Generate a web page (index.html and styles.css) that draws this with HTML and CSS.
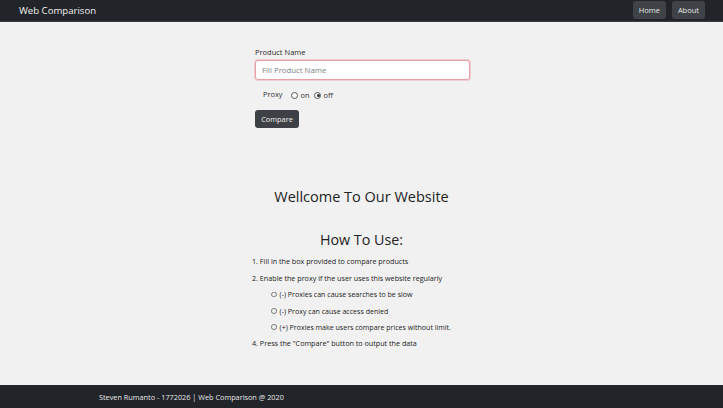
FILE: index.html
```html
<!DOCTYPE html>
<html>
<head>
<meta charset="utf-8">
<link rel="stylesheet" href="styles.css">
</head>
<body>
<nav class="navbar">
  <span class="brand">Web Comparison</span>
  <div class="nav-links">
    <a class="nav-btn">Home</a>
    <a class="nav-btn">About</a>
  </div>
</nav>
<main class="main">
  <form class="search-form">
    <label class="field-label">Product Name</label>
    <input class="field-input" type="text" placeholder="Fill Product Name">
    <div class="proxy-row">
      <span class="proxy-label">Proxy</span>
      <label class="radio"><span class="radio-dot"></span>on</label>
      <label class="radio"><span class="radio-dot checked"></span>off</label>
    </div>
    <button class="compare-btn" type="button">Compare</button>
  </form>
  <h2 class="welcome">Wellcome To Our Website</h2>
  <h2 class="howto">How To Use:</h2>
  <div class="steps">
    <div class="step">1. Fill in the box provided to compare products</div>
    <div class="step">2. Enable the proxy if the user uses this website regularly</div>
    <ul class="sub-steps">
      <li>(-) Proxies can cause searches to be slow</li>
      <li>(-) Proxy can cause access denied</li>
      <li>(+) Proxies make users compare prices without limit.</li>
    </ul>
    <div class="step">4. Press the "Compare" button to output the data</div>
  </div>
</main>
<footer class="footer">
  <span class="footer-text">Steven Rumanto - 1772026 | Web Comparison @ 2020</span>
</footer>
</body>
</html>
```
FILE: styles.css
```css
* { box-sizing: border-box; }
html, body { margin: 0; padding: 0; }
body {
  width: 723px;
  height: 408px;
  background: #f1f1f1;
  font-family: "Open Sans", "Noto Sans", sans-serif;
  color: #212529;
  display: flex;
  flex-direction: column;
  overflow: hidden;
}
.navbar {
  height: 22px;
  background: #212429;
  display: flex;
  align-items: center;
  justify-content: space-between;
  padding: 0 18px 0 19px;
  border-bottom: 1px solid #3a3d42;
}
.brand {
  color: #f2f2f2;
  font-size: 9.6px;
}
.nav-links { display: flex; gap: 6px; align-items: center; }
.nav-btn {
  background: #3f4247;
  color: #e8e8e8;
  font-size: 7.5px;
  height: 18px;
  display: flex;
  align-items: center;
  padding: 0 6px;
  border-radius: 3px;
  margin-top: -2px;
}
.main {
  flex: 1;
  display: flex;
  flex-direction: column;
  align-items: center;
}
.search-form {
  width: 215px;
  margin-left: 2px;
  padding-top: 24px;
  display: flex;
  flex-direction: column;
  align-items: flex-start;
}
.field-label {
  font-size: 7.5px;
  color: #2a2a2a;
  line-height: 12px;
  margin-bottom: 2px;
}
.field-input {
  width: 215px;
  height: 20px;
  border: 1px solid #e8a0a6;
  border-radius: 3px;
  background: #fff;
  box-shadow: 0 0 0 1px rgba(232, 140, 150, 0.35);
  padding: 0 6px;
  font-family: inherit;
  font-size: 7.8px;
  outline: none;
}
.field-input::placeholder { color: #7a7f85; }
.proxy-row {
  display: flex;
  align-items: center;
  height: 14px;
  margin-top: 8px;
  padding-left: 8px;
  font-size: 7.4px;
  color: #333;
}
.proxy-label { margin-right: 9px; margin-top: -3px; }
.radio {
  display: flex;
  align-items: center;
  margin-right: 5px;
}
.radio-dot {
  width: 7px;
  height: 7px;
  border: 0.8px solid #555;
  border-radius: 50%;
  margin-right: 2px;
  background: #fff;
  position: relative;
}
.radio-dot.checked::after {
  content: "";
  position: absolute;
  left: 1.2px;
  top: 1.2px;
  width: 3.2px;
  height: 3.2px;
  border-radius: 50%;
  background: #333;
}
.compare-btn {
  margin-top: 8px;
  width: 44px;
  height: 18px;
  background: #3d4146;
  color: #f0f0f0;
  border: none;
  border-radius: 3px;
  font-family: inherit;
  font-size: 7.4px;
  padding: 0;
}
.welcome {
  margin: 58px 0 0 0;
  font-weight: 400;
  font-size: 14.5px;
  line-height: 22px;
  color: #222;
}
.howto {
  margin: 21px 0 0 0;
  font-weight: 400;
  font-size: 14.3px;
  line-height: 22px;
  color: #222;
}
.steps {
  align-self: flex-start;
  margin-left: 252px;
  margin-top: 2px;
  width: 320px;
  color: #222;
}
.step {
  line-height: 16.6px;
  font-size: 7.2px;
}
.sub-steps {
  margin: 0;
  padding-left: 19px;
  list-style: none;
  font-size: 7.05px;
}
.sub-steps li {
  line-height: 16.4px;
  display: flex;
  align-items: center;
}
.sub-steps li::before {
  content: "";
  width: 3.6px;
  height: 3.6px;
  border: 0.7px solid #777;
  border-radius: 50%;
  margin-right: 3px;
  flex-shrink: 0;
}
.footer {
  height: 23px;
  background: #212429;
  display: flex;
  align-items: center;
  padding-left: 99px;
}
.footer-text {
  color: #e9e9e9;
  font-size: 7.3px;
}
```
